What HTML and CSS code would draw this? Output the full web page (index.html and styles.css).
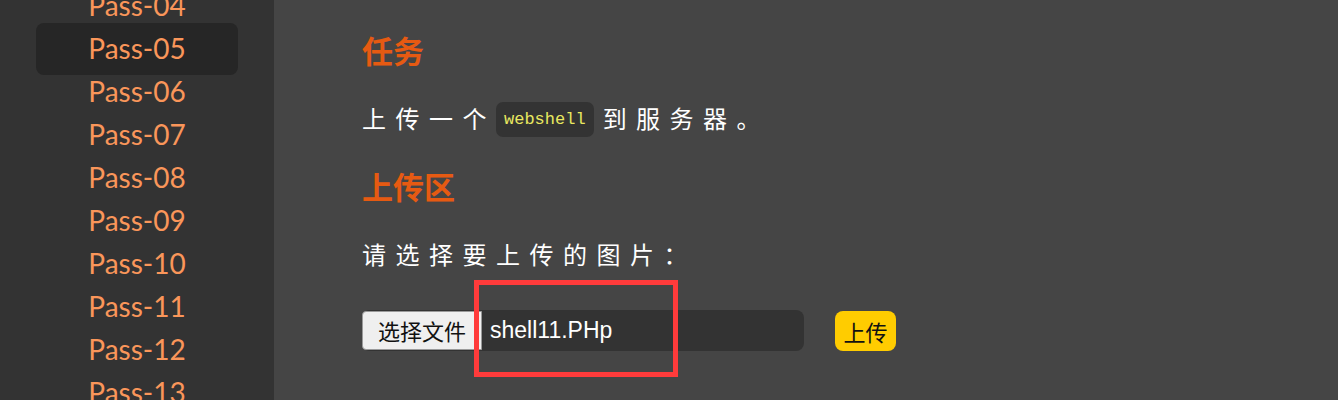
FILE: index.html
```html
<!DOCTYPE html>
<html lang="zh-CN">
<head>
<meta charset="utf-8">
<title>Pass-05</title>
<link rel="stylesheet" href="styles.css">
</head>
<body>
<div class="page">
  <nav class="sidebar">
    <ul class="pass-list">
      <li class="pass-item">Pass-04</li>
      <li class="pass-item active">Pass-05</li>
      <li class="pass-item">Pass-06</li>
      <li class="pass-item">Pass-07</li>
      <li class="pass-item">Pass-08</li>
      <li class="pass-item">Pass-09</li>
      <li class="pass-item">Pass-10</li>
      <li class="pass-item">Pass-11</li>
      <li class="pass-item">Pass-12</li>
      <li class="pass-item">Pass-13</li>
    </ul>
  </nav>
  <main class="main">
    <h2 class="heading">任务</h2>
    <p class="text">上传一个<code class="code">webshell</code>到服务器。</p>
    <h2 class="heading heading-2">上传区</h2>
    <p class="text text-2">请选择要上传的图片：</p>
    <div class="upload-row">
      <div class="file-input">
        <span class="file-btn">选择文件</span>
        <span class="file-name">shell11.PHp</span>
      </div>
      <span class="submit-btn">上传</span>
      <div class="highlight"></div>
    </div>
  </main>
</div>
</body>
</html>
```

FILE: styles.css
```css
html, body {
  margin: 0;
  padding: 0;
  height: 400px;
  overflow: hidden;
  background: #454545;
}

.page {
  display: flex;
  height: 400px;
}

.sidebar {
  width: 274px;
  flex: none;
  background: #333333;
  padding: 0 36px;
  box-sizing: border-box;
  overflow: hidden;
}

.pass-list {
  list-style: none;
  margin: -16px 0 0 0;
  padding: 0;
  display: flex;
  flex-direction: column;
}

.pass-item {
  height: 43px;
  line-height: 43px;
  text-align: center;
  font-family: Lato, "Noto Sans", sans-serif;
  font-size: 28px;
  color: #fa965a;
  border-radius: 8px;
}

.pass-item.active {
  background: #262626;
  padding: 4.5px 0;
  margin: -4.5px 0;
}

.main {
  flex: 1;
  padding: 30px 0 0 88px;
  display: flex;
  flex-direction: column;
  align-items: flex-start;
}

.heading {
  margin: 0;
  height: 40px;
  line-height: 40px;
  font-family: "Noto Sans CJK SC", sans-serif;
  font-size: 31px;
  font-weight: 700;
  color: #e65a12;
}

.heading-2 {
  margin-top: 28px;
}

.text {
  margin: 28px 0 0 0;
  height: 40px;
  line-height: 40px;
  font-family: "Noto Sans CJK SC", sans-serif;
  font-size: 24px;
  letter-spacing: 9.5px;
  color: #ffffff;
}

.text-2 {
  margin-top: 28px;
}

.code {
  display: inline-block;
  vertical-align: middle;
  margin: -3px 9px 0 0;
  padding: 0 8px;
  height: 35px;
  line-height: 35px;
  border-radius: 7px;
  background: #333333;
  font-family: "Liberation Mono", monospace;
  font-size: 17px;
  letter-spacing: 0;
  color: #e8e860;
}

.upload-row {
  position: relative;
  margin-top: 36px;
  display: flex;
  align-items: center;
  gap: 31px;
}

.file-input {
  display: flex;
  width: 442px;
  height: 41px;
  background: #333333;
  border-radius: 8px;
  align-items: center;
}

.file-btn {
  box-sizing: border-box;
  width: 120px;
  height: 39px;
  line-height: 37px;
  text-align: center;
  background: #efefef;
  border: 1px solid #9a9a9a;
  border-radius: 4px 0 0 4px;
  font-family: "Noto Sans CJK SC", sans-serif;
  font-size: 22px;
  color: #111111;
}

.file-name {
  padding-left: 8px;
  font-family: "Liberation Sans", Arial, sans-serif;
  font-size: 23px;
  color: #ffffff;
}

.submit-btn {
  width: 61px;
  height: 40px;
  line-height: 40px;
  text-align: center;
  background: #ffcc00;
  border-radius: 8px;
  font-family: "Noto Sans CJK SC", sans-serif;
  font-size: 22px;
  color: #111111;
}

.highlight {
  position: absolute;
  left: 112px;
  top: -30px;
  width: 204px;
  height: 97px;
  box-sizing: border-box;
  border: 5px solid #ff3b3b;
  pointer-events: none;
}
```
